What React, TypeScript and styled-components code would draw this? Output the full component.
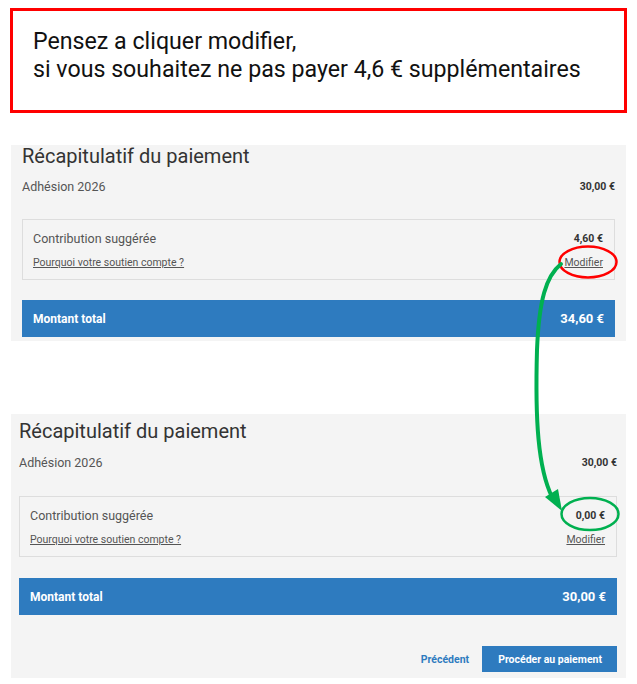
import React from 'react';
import styled, { createGlobalStyle } from 'styled-components';

const GlobalStyle = createGlobalStyle`
  html, body {
    margin: 0;
    padding: 0;
    background: #ffffff;
  }
  body {
    font-family: Roboto, "Liberation Sans", Arial, sans-serif;
  }
`;

const Page = styled.div`
  position: relative;
  width: 637px;
  height: 684px;
  overflow: hidden;
  background: #ffffff;
  padding-top: 8px;
  box-sizing: border-box;
`;

const Note = styled.div`
  margin: 0 10px 0 10px;
  height: 105px;
  box-sizing: border-box;
  border: 3px solid #ff0000;
  padding: 16px 0 0 20px;
  font-family: Roboto, "Liberation Sans", Arial, sans-serif;
  font-size: 23.2px;
  line-height: 28px;
  color: #111111;
`;

const Panel = styled.section<{ $top: number; $padTop: number; $padLeft: number; $padRight: number }>`
  margin: ${(p) => p.$top}px 11px 0 11px;
  width: 615px;
  box-sizing: border-box;
  background: #f4f4f4;
  padding: ${(p) => p.$padTop}px ${(p) => p.$padRight}px 4px ${(p) => p.$padLeft}px;
  display: flex;
  flex-direction: column;
`;

const Title = styled.h2`
  margin: 0;
  font-size: 20px;
  line-height: 22px;
  font-weight: 400;
  color: #333333;
`;

const Row = styled.div`
  display: flex;
  justify-content: space-between;
  align-items: center;
`;

const ItemRow = styled(Row)<{ $gap: number }>`
  margin-top: ${(p) => p.$gap}px;
  height: 16px;
`;

const Label = styled.span`
  font-size: 12.5px;
  color: #555555;
`;

const Amount = styled.span`
  font-size: 10.5px;
  font-weight: 700;
  color: #333333;
`;

const ContributionBox = styled.div<{ $gap: number }>`
  margin-top: ${(p) => p.$gap}px;
  border: 1px solid #dddddd;
  padding: 11px 11px 9px 10px;
  display: flex;
  flex-direction: column;
  gap: 10px;
`;

const SmallLink = styled.a`
  font-size: 10.5px;
  line-height: 14px;
  color: #555555;
  text-decoration: underline;
  cursor: pointer;
`;

const TotalBar = styled(Row)<{ $gap: number }>`
  margin-top: ${(p) => p.$gap}px;
  height: 37px;
  background: #2e7bbf;
  padding: 0 11px;
  color: #ffffff;
  font-weight: 700;
`;

const TotalLabel = styled.span`
  font-size: 12px;
`;

const TotalAmount = styled.span`
  font-size: 13px;
`;

const Actions = styled.div`
  margin-top: 31px;
  margin-bottom: 2px;
  display: flex;
  justify-content: flex-end;
  align-items: center;
  gap: 13px;
`;

const BackLink = styled.a`
  font-size: 10.5px;
  font-weight: 700;
  color: #2e7bbf;
  cursor: pointer;
`;

const PayButton = styled.button`
  height: 26px;
  padding: 0 15px 0 16px;
  border: none;
  background: #2e7bbf;
  color: #ffffff;
  font-family: inherit;
  font-size: 10.5px;
  font-weight: 700;
  cursor: pointer;
`;

const Overlay = styled.svg`
  position: absolute;
  left: 0;
  top: 0;
  pointer-events: none;
`;

type Spacing = { item: number; box: number; bar: number };

const Summary = ({
  contribution,
  total,
  top,
  padTop,
  padLeft,
  padRight,
  spacing,
  withActions,
}: {
  contribution: string;
  total: string;
  top: number;
  padTop: number;
  padLeft: number;
  padRight: number;
  spacing: Spacing;
  withActions?: boolean;
}) => (
  <Panel $top={top} $padTop={padTop} $padLeft={padLeft} $padRight={padRight}>
    <Title>Récapitulatif du paiement</Title>
    <ItemRow $gap={spacing.item}>
      <Label>Adhésion 2026</Label>
      <Amount>30,00 €</Amount>
    </ItemRow>
    <ContributionBox $gap={spacing.box}>
      <Row>
        <Label>Contribution suggérée</Label>
        <Amount>{contribution}</Amount>
      </Row>
      <Row>
        <SmallLink>Pourquoi votre soutien compte ?</SmallLink>
        <SmallLink>Modifier</SmallLink>
      </Row>
    </ContributionBox>
    <TotalBar $gap={spacing.bar}>
      <TotalLabel>Montant total</TotalLabel>
      <TotalAmount>{total}</TotalAmount>
    </TotalBar>
    {withActions && (
      <Actions>
        <BackLink>Précédent</BackLink>
        <PayButton>Procéder au paiement</PayButton>
      </Actions>
    )}
  </Panel>
);

export default function App() {
  return (
    <>
      <GlobalStyle />
      <Page>
        <Note>
          Pensez a cliquer modifier,
          <br />
          si vous souhaitez ne pas payer 4,6 € supplémentaires
        </Note>
        <Summary
          contribution="4,60 €"
          total="34,60 €"
          top={32}
          padTop={0}
          padLeft={11}
          padRight={11}
          spacing={{ item: 11, box: 25, bar: 20 }}
        />
        <Summary
          contribution="0,00 €"
          total="30,00 €"
          top={73}
          padTop={6}
          padLeft={8}
          padRight={9}
          spacing={{ item: 12, box: 26, bar: 21 }}
          withActions
        />
        <Overlay width="637" height="684" viewBox="0 0 637 684">
          <ellipse cx="588" cy="262" rx="28.5" ry="15.5" fill="none" stroke="#ff0000" strokeWidth="2.5" />
          <ellipse cx="590" cy="514" rx="28.5" ry="16" fill="none" stroke="#00b050" strokeWidth="2.5" />
          <path
            d="M 561 264 C 546 276 539 300 537 350 C 535 420 538 468 552 497"
            fill="none"
            stroke="#00b050"
            strokeWidth="4"
            strokeLinecap="round"
          />
          <polygon points="562,511 545,497 558,489" fill="#00b050" />
        </Overlay>
      </Page>
    </>
  );
}
